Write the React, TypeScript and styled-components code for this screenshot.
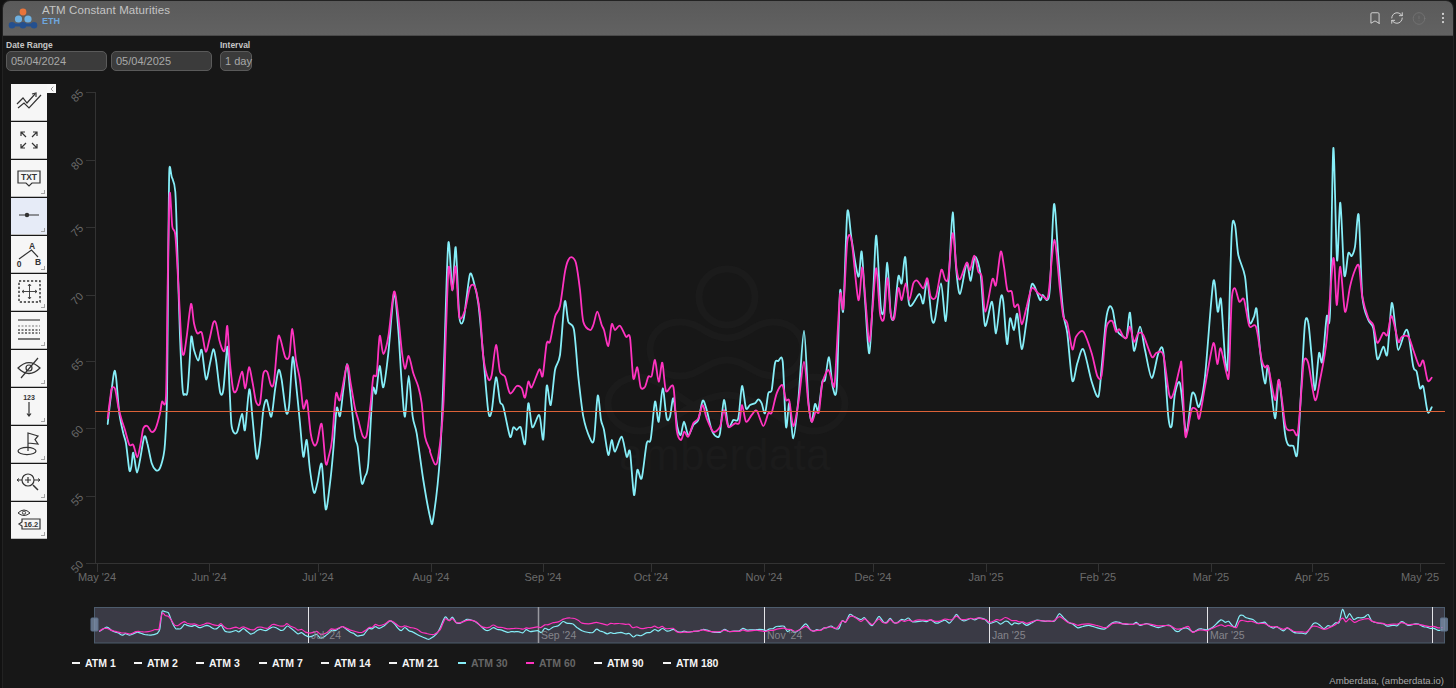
import React from "react";
import styled, { createGlobalStyle } from "styled-components";
import { Bookmark, RefreshCw, CircleAlert, EllipsisVertical, ChevronLeft } from "lucide-react";

const FONT = `"Liberation Sans", Arial, sans-serif`;

const Global = createGlobalStyle`
  html, body { margin: 0; padding: 0; background: #121212; overflow: hidden; }
  body { font-family: ${FONT}; }
`;

type Seg = { ox: number; oy: number; from: number; to: number; d: number[] };

const cyanSegs: Seg[] = [
  { ox: 90, oy: 150, from: 0, to: 430, d: [53,822,60,760,72,668,78,680,88,790,100,850,108,880,118,960,124,950,129,908,134,930,141,968,150,930,163,860,172,880,185,940,197,960,208,958,220,920,225,880,231,740,235,300,238,62,245,80,256,125,262,300,270,560,278,720,285,732,292,728,298,650,304,560,312,600,325,632,335,600,348,688,360,640,370,598,378,630,390,725,400,720,412,590,418,700,424,820,432,848,442,845,456,792,465,840,478,718,488,810,500,925,510,880,520,780,530,750,544,800,555,720,566,660,575,690,588,785,597,770,608,622,618,700,630,820,640,920,650,870,660,960,672,1028,682,1000,695,942,707,1078,720,1000,730,900,740,775,750,798,760,720,771,642,780,720,795,860,803,890,815,998,825,980,835,940,848,722,858,730,869,648,880,712,895,610,912,430,925,540,935,700,945,800,956,678,968,800,980,850,1000,990,1020,1100] },
  { ox: 420, oy: 230, from: 430, to: 830, d: [39,870,60,680,72,400,85,40,97,180,107,52,118,260,130,272,140,200,150,132,160,150,175,220,190,380,205,545,215,543,228,442,240,515,250,530,270,620,280,592,290,600,302,592,315,642,325,520,337,592,358,555,370,628,380,468,392,525,405,420,420,375,434,215,445,275,462,300,475,440,490,560,510,625,522,628,533,497,543,570,552,600,565,675,575,630,585,665,605,620,620,680,630,665,642,795,652,720,665,745,680,640,692,628,705,515,716,575,728,475,740,565,750,560,760,505,772,590,782,615,792,575,805,615,820,585,835,570,848,512,860,540,875,600,890,620,900,610,912,510,925,590,940,570,955,565,966,468,978,535,990,525,1005,520,1015,508,1025,520,1035,550,1045,490,1055,480,1065,400,1075,393,1088,395,1098,590,1108,520,1120,625,1135,510,1152,302,1165,510,1175,575,1185,522,1195,540,1207,455,1215,450,1227,382] },
  { ox: 830, oy: 190, from: 830, to: 1130, d: [8,590,20,595,30,305,40,360,52,67,65,150,85,260,95,185,105,330,118,490,130,300,139,137,152,350,162,358,172,218,182,370,192,380,205,260,215,280,226,202,238,345,268,312,280,340,292,270,305,385,315,388,333,280,347,393,358,240,368,67,378,230,390,312,410,220,422,272,435,200,452,255,465,407,486,335,498,430,512,323,520,335,531,462,540,385,552,420,562,372,575,477,590,390,606,282,630,330,638,315,652,330,660,290,672,43,685,200,700,370,712,430,727,572,742,520,760,478,785,575,805,620,815,530,828,390,838,350,848,360,860,420,880,440,890,440] },
  { ox: 1130, oy: 140, from: 1130, to: 9999, d: [0,518,12,632,30,560,45,630,65,714,85,640,100,635,115,830,125,858,135,760,150,730,165,860,172,870,185,765,195,765,207,800,225,710,250,425,263,515,273,478,285,650,293,668,305,280,315,255,325,345,345,410,358,545,372,530,380,508,390,630,405,730,415,680,435,835,447,720,465,880,475,915,490,918,502,940,515,720,525,550,535,548,545,650,555,750,567,640,577,665,590,530,600,520,610,25,621,360,631,188,643,405,655,340,665,348,675,320,686,225,697,470,715,540,730,565,742,657,760,620,772,642,785,490,797,570,805,630,825,575,835,580,850,680,860,695,870,745,880,740,893,816,905,802] },
];

const pinkSegs: Seg[] = [
  { ox: 90, oy: 150, from: 0, to: 430, d: [53,805,60,750,65,716,75,716,85,770,95,810,105,840,118,884,130,885,142,922,152,880,160,835,172,828,185,846,197,835,210,790,216,755,228,738,233,400,239,132,247,230,256,255,265,400,275,590,282,612,290,560,303,462,312,520,322,550,335,548,347,605,358,570,370,518,378,520,388,570,398,600,405,598,412,528,420,640,430,720,440,720,456,665,466,715,477,652,488,700,498,755,510,760,520,672,532,666,543,706,552,695,564,565,572,570,586,622,598,618,607,537,618,630,630,690,640,775,651,752,662,850,673,886,682,875,695,822,707,940,716,920,726,870,738,732,750,750,771,645,782,700,795,775,805,810,818,858,830,855,842,760,850,680,860,672,869,558,880,612,895,560,912,425,925,500,935,600,945,656,956,618,970,670,985,710,995,760,1005,860,1020,900] },
  { ox: 420, oy: 230, from: 430, to: 830, d: [30,665,45,703,55,680,70,530,78,300,86,112,97,182,107,110,118,260,135,240,150,172,165,172,180,250,190,380,205,447,215,435,228,345,240,425,255,440,270,490,290,468,305,475,315,503,325,455,335,472,358,418,368,438,380,340,390,335,405,260,420,228,435,125,445,90,456,82,468,100,480,180,490,275,510,300,520,285,532,245,545,285,552,300,565,348,575,283,585,300,600,287,618,320,630,322,640,445,652,412,662,472,675,470,685,440,695,438,705,390,716,455,727,398,738,483,760,470,770,600,783,630,793,605,805,620,820,580,835,565,848,525,860,565,880,605,900,590,912,540,925,590,945,580,958,578,966,525,978,575,995,555,1010,542,1030,588,1045,550,1055,548,1070,490,1087,465,1098,510,1108,512,1120,588,1135,520,1152,395,1165,520,1175,575,1187,545,1197,545,1207,460,1225,420] },
  { ox: 830, oy: 190, from: 830, to: 1130, d: [8,580,15,570,30,315,40,355,52,155,65,155,85,330,97,232,107,340,118,455,128,350,139,235,150,370,162,385,172,265,182,370,193,385,205,295,215,330,227,280,238,330,250,280,262,272,280,295,292,265,302,320,318,320,334,240,345,268,355,262,368,130,380,240,390,268,410,218,420,240,433,197,445,245,455,260,466,365,487,268,498,285,512,185,522,230,532,300,545,305,553,350,565,345,575,403,590,350,605,295,625,310,640,320,655,315,673,150,690,300,700,380,712,400,727,478,738,440,760,425,785,490,802,558,815,555,828,420,838,395,848,395,858,425,868,418,880,440,890,443] },
  { ox: 1130, oy: 140, from: 1130, to: 9999, d: [0,560,12,605,25,580,40,585,65,650,80,638,100,645,118,765,130,762,150,680,155,680,165,878,172,875,185,808,200,810,208,835,225,740,250,610,262,672,272,625,290,702,297,700,305,480,315,445,328,485,342,478,358,558,378,560,395,660,405,682,415,682,435,780,447,720,465,850,475,870,490,870,503,880,515,740,522,662,535,670,555,780,570,720,590,600,610,355,620,495,631,380,645,515,660,440,675,390,687,378,697,470,715,535,730,555,742,608,760,578,772,585,785,528,805,605,815,590,835,590,850,630,868,678,880,662,893,722,905,713] },
];

type Pt = [number, number];

const flatten = (segs: Seg[]): Pt[] => {
  const out: Pt[] = [];
  segs.forEach((s) => {
    for (let i = 0; i < s.d.length; i += 2) {
      const x = s.ox + s.d[i] / 3;
      const y = s.oy + s.d[i + 1] / 3;
      if (x >= s.from && x <= s.to) out.push([x, y]);
    }
  });
  return out;
};

const smooth = (p: Pt[]): string => {
  let d = `M${p[0][0].toFixed(1)} ${p[0][1].toFixed(1)}`;
  for (let i = 0; i < p.length - 1; i++) {
    const a = p[Math.max(0, i - 1)];
    const b = p[i];
    const c = p[i + 1];
    const e = p[Math.min(p.length - 1, i + 2)];
    const k = 1 / 7;
    d += `C${(b[0] + (c[0] - a[0]) * k).toFixed(1)} ${(b[1] + (c[1] - a[1]) * k).toFixed(1)} ${(c[0] - (e[0] - b[0]) * k).toFixed(1)} ${(c[1] - (e[1] - b[1]) * k).toFixed(1)} ${c[0].toFixed(1)} ${c[1].toFixed(1)}`;
  }
  return d;
};

const cyan = flatten(cyanSegs);
const pink = flatten(pinkSegs);
const toNav = (p: Pt[]): Pt[] => p.map(([x, y]) => [100 + (x - 108) * 1.014, 611 + (y - 170) * 0.08]);

const Frame = styled.div`
  width: 1450px;
  height: 687px;
  margin: 1px 0 0 3px;
  background: #171717;
  border-radius: 7px 7px 0 0;
  box-shadow: 0 0 0 1px #222;
  overflow: hidden;
`;
const Header = styled.header`
  height: 34px;
  display: flex;
  align-items: center;
  padding: 0 3px 0 3px;
  background: linear-gradient(#5a5a5a, #626262);
  border-bottom: 1px solid #4a4a4a;
`;
const LogoMark = styled.svg`
  width: 36px;
  height: 34px;
  flex: none;
`;
const Titles = styled.div`
  display: flex;
  flex-direction: column;
  flex: 1;
  margin-bottom: 6px;
`;
const Title = styled.div`
  font-size: 11.5px;
  line-height: 13px;
  letter-spacing: 0.1px;
  color: #c4c4c4;
`;
const Sub = styled.div`
  font-size: 9px;
  line-height: 9px;
  font-weight: 700;
  color: #6ea6dd;
`;
const HeaderIcons = styled.div`
  display: flex;
  align-items: center;
  gap: 8px;
  color: #d4d4d4;
`;
const IconSlot = styled.span<{ $dim?: boolean; $last?: boolean }>`
  display: flex;
  width: 14px;
  justify-content: center;
  margin-left: ${(p) => (p.$last ? "2px" : "0")};
  color: ${(p) => (p.$dim ? "#7c7c7c" : "#d8d8d8")};
`;
const Controls = styled.div`
  height: 48px;
  display: flex;
  gap: 8px;
  padding: 5px 0 0 3px;
  box-sizing: border-box;
`;
const Field = styled.div`
  display: flex;
  flex-direction: column;
  gap: 1px;
`;
const Label = styled.label`
  font-size: 8.5px;
  line-height: 9px;
  font-weight: 700;
  color: #c6c6c6;
`;
const Inputs = styled.div`
  display: flex;
  gap: 4px;
`;
const Box = styled.div<{ $w: number }>`
  width: ${(p) => p.$w}px;
  height: 20px;
  box-sizing: border-box;
  padding-left: 4px;
  display: flex;
  align-items: center;
  white-space: nowrap;
  font-size: 11px;
  color: #a8a8a8;
  background: #3b3b3b;
  border: 1px solid #5a5a5a;
  border-radius: 5px;
`;
const ChartRow = styled.div`
  display: flex;
  height: 506px;
  padding-left: 8px;
  gap: 13px;
`;
const Toolbar = styled.div`
  position: relative;
  width: 36px;
  display: flex;
  flex-direction: column;
  gap: 2px;
`;
const Collapse = styled.div`
  position: absolute;
  left: 36px;
  top: 0;
  width: 9px;
  height: 9px;
  background: #f8f8f8;
  color: #666;
  display: flex;
  align-items: center;
  justify-content: center;
`;
const ToolBtn = styled.div<{ $active?: boolean; $corner?: boolean }>`
  position: relative;
  width: 36px;
  height: 36px;
  flex: none;
  background: ${(p) => (p.$active ? "#e6ebf7" : "#f6f6f6")};
  box-shadow: 0 1px 0 #bdbdbd;
  &::after {
    content: "";
    display: ${(p) => (p.$corner ? "block" : "none")};
    position: absolute;
    right: 2px;
    bottom: 2px;
    width: 3px;
    height: 3px;
    border-right: 1px solid #a4a4a4;
    border-bottom: 1px solid #a4a4a4;
  }
`;
const ToolSvg = styled.svg`
  width: 36px;
  height: 36px;
  display: block;
  fill: none;
  stroke: #333;
  stroke-width: 1.2;
`;
const ToolText = styled.text<{ $size: number }>`
  font-family: ${FONT};
  font-weight: 700;
  font-size: ${(p) => p.$size}px;
  fill: #333;
  stroke: none;
  text-anchor: middle;
`;
const ChartSvg = styled.svg`
  width: 1393px;
  height: 506px;
  display: block;
  flex: none;
`;
const AxisText = styled.text`
  font-family: ${FONT};
  font-size: 11px;
  fill: #6a6a6a;
  text-anchor: middle;
  dominant-baseline: central;
`;
const WatermarkText = styled.text`
  font-family: ${FONT};
  font-size: 43.5px;
  letter-spacing: 0.4px;
  fill: #1b1b1b;
`;
const NavSvg = styled.svg`
  display: block;
  width: 1362px;
  height: 44px;
  margin: 14px 0 0 85px;
`;
const NavText = styled.text`
  font-family: ${FONT};
  font-size: 10.5px;
  fill: #85858c;
  dominant-baseline: central;
`;
const Legend = styled.div`
  display: flex;
  height: 14px;
  margin-top: 8px;
  padding-left: 69px;
  gap: 18px;
`;
const LegendItem = styled.div<{ $muted?: boolean; $w: number }>`
  display: flex;
  align-items: center;
  gap: 5px;
  width: ${(p) => p.$w}px;
  font-size: 10.5px;
  font-weight: 700;
  white-space: nowrap;
  color: ${(p) => (p.$muted ? "#666" : "#f4f4f4")};
`;
const Dash = styled.span<{ $color: string }>`
  width: 8px;
  height: 2px;
  flex: none;
  background: ${(p) => p.$color};
`;
const Credit = styled.div`
  margin-top: 5px;
  padding-right: 9px;
  text-align: right;
  font-size: 9.6px;
  line-height: 12px;
  color: #a8a8a8;
`;

const tools: { key: string; corner?: boolean; active?: boolean; body: React.ReactNode }[] = [
  { key: "trend", body: <><path d="M6 20 L12 14 L16 19 L24 10" /><path d="M7 24 L13 19 L18 24 L30 11" /><path d="M21 10 L25 9 L25 13" /></> },
  { key: "fit", body: <><path d="M15 15 L10 10 M10 14 V10 H14" /><path d="M21 15 L26 10 M22 10 H26 V14" /><path d="M15 21 L10 26 M10 22 V26 H14" /><path d="M21 21 L26 26 M26 22 V26 H22" /></> },
  { key: "txt", corner: true, body: <><path d="M7 11 H29 V23 H21 L18 26 L15 23 H7 Z" /><ToolText $size={8.5} x={18} y={20.3}>TXT</ToolText></> },
  { key: "line", corner: true, active: true, body: <><path d="M8 17 H28" /><circle cx={16} cy={17} r={1.6} fill="#333" /></> },
  { key: "abc", corner: true, body: <><path d="M8 23 L20.5 14 L27 21" /><ToolText $size={8.5} x={21} y={12.5}>A</ToolText><ToolText $size={8.5} x={8} y={31}>0</ToolText><ToolText $size={8.5} x={27} y={28.5}>B</ToolText></> },
  { key: "rect", corner: true, body: <><rect x={8} y={7} width={21} height={21} strokeDasharray="2.2 1.8" strokeWidth={1.4} /><path d="M18.5 10 V25 M11 17.5 H26 M17 12 L18.5 10 L20 12 M17 23 L18.5 25 L20 23 M13 16 L11 17.5 L13 19 M24 16 L26 17.5 L24 19" strokeWidth={0.9} /></> },
  { key: "table", corner: true, body: <><path d="M7 8 H29" strokeWidth={1.5} stroke="#666" /><path d="M7 18 H29 M7 21 H29" strokeDasharray="2 1.5" strokeWidth={1.4} stroke="#555" /><path d="M7 14 H29" strokeDasharray="2 1.5" strokeWidth={1.2} stroke="#777" /><path d="M7 27 H29" strokeWidth={1.3} /></> },
  { key: "eye", corner: true, body: <><path d="M7 18 Q18 7 29 18 Q18 29 7 18 Z" /><circle cx={18} cy={18} r={3} /><path d="M10 28 L27 8" /></> },
  { key: "num", corner: true, body: <><ToolText $size={7} x={18} y={12}>123</ToolText><path d="M18 14 V28 M16 25.5 L18 28 L20 25.5" /></> },
  { key: "flag", corner: true, body: <><ellipse cx={16} cy={25} rx={9} ry={3.6} /><path d="M17 25 V7 L27 10 L24 13.5 L27 18 L17 17" /></> },
  { key: "zoom", corner: true, body: <><circle cx={17} cy={16} r={6} /><path d="M22 21 L27 26" strokeWidth={1.5} /><path d="M14 16 H20 M17 13 V19" /><path d="M6 16 H11 M23 16 H29 M8 14.5 L6 16 L8 17.5 M27 14.5 L29 16 L27 17.5" strokeWidth={1} /></> },
  { key: "tag", corner: true, body: <><path d="M7 11 Q13 5 19 11 Q13 16 7 11 Z" strokeWidth={1} /><circle cx={13} cy={10.7} r={1.6} strokeWidth={0.9} /><path d="M11 17 H29 V27 H11 V24 L8 22 L11 20 Z" /><ToolText $size={7.5} x={20} y={25}>16.2</ToolText></> },
];

const yTicks = [[85, 92.5], [80, 160.5], [75, 227.5], [70, 295.5], [65, 361.5], [60, 428.5], [55, 496.5], [50, 563.5]];
const xTicks: [string, number][] = [["May '24", 97], ["Jun '24", 209], ["Jul '24", 318], ["Aug '24", 431], ["Sep '24", 543], ["Oct '24", 651], ["Nov '24", 764], ["Dec '24", 873], ["Jan '25", 986], ["Feb '25", 1098], ["Mar '25", 1211], ["Apr '25", 1312], ["May '25", 1420]];
const navMarks: [number, string][] = [[308, "Jul '24"], [538, "Sep '24"], [764, "Nov '24"], [989, "Jan '25"], [1207, "Mar '25"], [1432, ""]];
const legend: [string, number, boolean, string][] = [
  ["ATM 1", 44, false, "#f4f4f4"], ["ATM 2", 44, false, "#f4f4f4"], ["ATM 3", 45, false, "#f4f4f4"], ["ATM 7", 44, false, "#f4f4f4"], ["ATM 14", 50, false, "#f4f4f4"], ["ATM 21", 51, false, "#f4f4f4"], ["ATM 30", 50, true, "#86eef8"], ["ATM 60", 50, true, "#ff33c0"], ["ATM 90", 51, false, "#f4f4f4"], ["ATM 180", 58, false, "#f4f4f4"],
];

const Line: React.FC<{ pts: Pt[]; color: string; w: number }> = ({ pts, color, w }) => (
  <path d={smooth(pts)} fill="none" stroke={color} strokeWidth={w} strokeLinejoin="round" strokeLinecap="round" />
);

export default function App() {
  return (
    <Frame>
      <Global />
      <Header>
        <LogoMark viewBox="3 1 36 34">
          <path d="M9 25 H31" stroke="#24508f" strokeWidth={3} />
          <circle cx={20} cy={12} r={3.4} fill="#e8743b" />
          <circle cx={15.5} cy={19} r={3.6} fill="#6fb0e0" />
          <circle cx={25} cy={19} r={3.6} fill="#6fb0e0" />
          <circle cx={9} cy={25.3} r={3.3} fill="#24508f" />
          <circle cx={20} cy={25.3} r={3.3} fill="#24508f" />
          <circle cx={31} cy={25.3} r={3.3} fill="#24508f" />
        </LogoMark>
        <Titles>
          <Title>ATM Constant Maturities</Title>
          <Sub>ETH</Sub>
        </Titles>
        <HeaderIcons>
          <IconSlot><Bookmark size={14} strokeWidth={1.6} /></IconSlot>
          <IconSlot><RefreshCw size={14} strokeWidth={1.6} /></IconSlot>
          <IconSlot $dim><CircleAlert size={15} strokeWidth={1.1} /></IconSlot>
          <IconSlot $last><EllipsisVertical size={14} strokeWidth={1.8} /></IconSlot>
        </HeaderIcons>
      </Header>
      <Controls>
        <Field>
          <Label>Date Range</Label>
          <Inputs>
            <Box $w={101}>05/04/2024</Box>
            <Box $w={101}>05/04/2025</Box>
          </Inputs>
        </Field>
        <Field>
          <Label>Interval</Label>
          <Box $w={32}>1 day</Box>
        </Field>
      </Controls>
      <ChartRow>
        <Toolbar>
          <Collapse><ChevronLeft size={8} strokeWidth={2} /></Collapse>
          {tools.map((t) => (
            <ToolBtn key={t.key} $active={t.active} $corner={t.corner}>
              <ToolSvg viewBox="0 0 36 36">{t.body}</ToolSvg>
            </ToolBtn>
          ))}
        </Toolbar>
        <ChartSvg viewBox="60 84 1393 506">
          <g fill="none" stroke="#1b1b1b" strokeWidth={7}>
            <circle cx={727} cy={297} r={28} />
            <path d="M680 322 C700 322 708 338 727 338 C746 338 754 322 773 322 C792 322 803 335 803 349 C803 363 792 376 773 376 C754 376 746 360 727 360 C708 360 700 376 680 376 C661 376 650 363 650 349 C650 335 661 322 680 322 Z" />
            <path d="M640 377 C665 377 695 418 727 418 C759 418 789 377 813 377 C832 377 845 390 845 403 C845 418 832 431 813 431 C789 431 759 395 727 395 C695 395 665 431 640 431 C621 431 608 418 608 403 C608 390 621 377 640 377 Z" />
          </g>
          <WatermarkText x={619} y={470}>amberdata</WatermarkText>
          <path d="M95.5 92 V564 M86 563.5 H1445" stroke="#333" strokeWidth={1} fill="none" />
          {yTicks.map(([v, y]) => (
            <g key={v}>
              <path d={`M86 ${y} H95`} stroke="#333" />
              <AxisText x={77} y={y + 3} transform={`rotate(-45 77 ${y + 3})`}>{v}</AxisText>
            </g>
          ))}
          {xTicks.map(([l, x]) => (
            <g key={l}>
              <path d={`M${x + 0.5} 564 V572`} stroke="#333" />
              <AxisText x={x} y={577}>{l}</AxisText>
            </g>
          ))}
          <Line pts={cyan} color="#86eef8" w={1.8} />
          <Line pts={pink} color="#ff33c0" w={1.8} />
          <path d="M95 411.5 H1445" stroke="#dc6238" strokeWidth={1} />
        </ChartSvg>
      </ChartRow>
      <NavSvg viewBox="88 604 1362 44">
        <rect x={94.5} y={607.5} width={1350} height={35.5} fill="#3a3a45" stroke="#4d5c6d" />
        {navMarks.map(([x]) => (
          <path key={x} d={`M${x + 0.5} 607 V643`} stroke={x === 538 ? "#9a9aa0" : "#e4e4e8"} strokeWidth={x === 538 ? 1.5 : 1} />
        ))}
        <Line pts={toNav(cyan)} color="#86eef8" w={1.2} />
        <Line pts={toNav(pink)} color="#ff33c0" w={1.2} />
        {navMarks.map(([x, l]) => (l ? <NavText key={l} x={x + 3} y={635}>{l}</NavText> : null))}
        <rect x={91} y={618} width={7} height={13} rx={1} fill="#7f93ad" fillOpacity={0.75} stroke="#5c708a" />
        <rect x={1440.5} y={618} width={7} height={13} rx={1} fill="#7f93ad" fillOpacity={0.75} stroke="#5c708a" />
      </NavSvg>
      <Legend>
        {legend.map(([label, w, muted, color]) => (
          <LegendItem key={label} $w={w} $muted={muted}>
            <Dash $color={color} />
            {label}
          </LegendItem>
        ))}
      </Legend>
      <Credit>Amberdata, (amberdata.io)</Credit>
    </Frame>
  );
}
